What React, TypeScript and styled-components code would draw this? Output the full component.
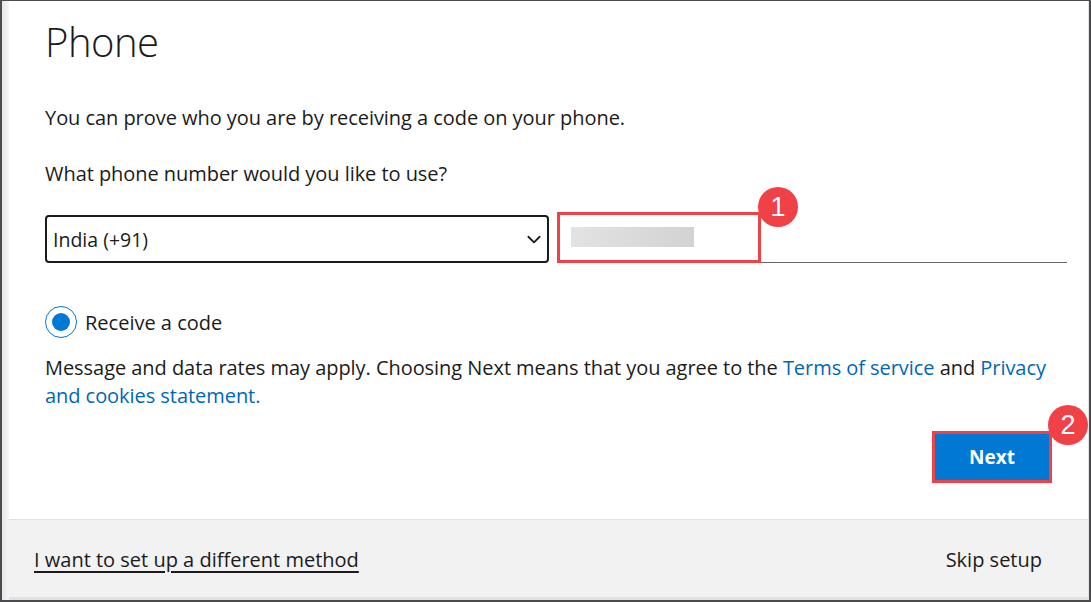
import React from "react";
import styled, { createGlobalStyle } from "styled-components";

const Global = createGlobalStyle`
  html, body { margin: 0; padding: 0; background: #ffffff; }
  * { box-sizing: border-box; }
  body { font-family: "Open Sans", "Noto Sans", sans-serif; }
`;

const Frame = styled.div`
  width: 1091px;
  height: 602px;
  border: 2px solid #4b4a4c;
  border-top-width: 1px;
  display: flex;
  background: #ffffff;
  overflow: hidden;
`;

const EdgeShade = styled.div`
  width: 7px;
  flex: none;
  background: linear-gradient(to right, #e6e6e6, #f4f4f4);
`;

const Card = styled.div`
  flex: 1;
  display: flex;
  flex-direction: column;
  border-right: 1px solid #e4e4e4;
  border-bottom: 3px solid #e2e2e2;
`;

const Body = styled.div`
  flex: 1;
  padding: 14px 20px 0 36px;
  display: flex;
  flex-direction: column;
`;

const Title = styled.h1`
  margin: 0;
  font-family: "Open Sans", sans-serif;
  font-weight: 300;
  font-size: 40px;
  line-height: 54px;
  color: #1b1b1b;
  letter-spacing: -0.5px;
`;

const Para = styled.p<{ $top: number }>`
  margin: ${(p) => p.$top}px 0 0 0;
  font-family: "Open Sans", sans-serif;
  font-size: 20px;
  line-height: 28px;
  color: #1b1b1b;
  letter-spacing: -0.05px;
`;

const PhoneRow = styled.div`
  margin-top: 27px;
  display: flex;
  align-items: flex-end;
  gap: 8px;
  width: 1022px;
`;

const SelectBox = styled.div`
  width: 504px;
  height: 48px;
  border: 2px solid #1b1b1b;
  border-radius: 4px;
  display: flex;
  align-items: center;
  justify-content: space-between;
  padding: 0 4px 0 6px;
  font-family: "Open Sans", sans-serif;
  font-size: 19.5px;
  color: #1b1b1b;
`;

const InputWrap = styled.div`
  position: relative;
  flex: 1;
  height: 48px;
  border-bottom: 1px solid #666666;
  display: flex;
  align-items: center;
  padding-left: 14px;
`;

const Blurred = styled.div`
  width: 123px;
  height: 20px;
  margin-top: -4px;
  background: linear-gradient(100deg, #e3e3e3 0%, #d9d9d9 60%, #d2d2d2 100%);
  filter: blur(0.6px);
`;

const Highlight = styled.div<{ $w: number; $h: number; $l: number; $t: number }>`
  position: absolute;
  left: ${(p) => p.$l}px;
  top: ${(p) => p.$t}px;
  width: ${(p) => p.$w}px;
  height: ${(p) => p.$h}px;
  border: 3px solid #ef4146;
  pointer-events: none;
`;

const Badge = styled.div<{ $l: number; $t: number }>`
  position: absolute;
  left: ${(p) => p.$l}px;
  top: ${(p) => p.$t}px;
  width: 40px;
  height: 40px;
  border-radius: 50%;
  background: #ef4146;
  color: #ffffff;
  font-family: "Liberation Sans", Arial, sans-serif;
  font-size: 27px;
  font-weight: 400;
  display: flex;
  align-items: center;
  justify-content: center;
  line-height: 1;
`;

const RadioRow = styled.label`
  margin-top: 43px;
  display: flex;
  align-items: center;
  gap: 8px;
  font-family: "Open Sans", sans-serif;
  font-size: 20px;
  color: #1b1b1b;
`;

const RadioOuter = styled.span`
  width: 32px;
  height: 32px;
  border-radius: 50%;
  border: 1.5px solid #0078d4;
  display: flex;
  align-items: center;
  justify-content: center;
`;

const RadioDot = styled.span`
  width: 18px;
  height: 18px;
  border-radius: 50%;
  background: #0078d4;
`;

const Link = styled.a`
  color: #0067b8;
  text-decoration: none;
`;

const ButtonRow = styled.div`
  margin-top: 21px;
  display: flex;
  justify-content: flex-end;
  padding-right: 16px;
`;

const ButtonWrap = styled.div`
  position: relative;
`;

const NextButton = styled.button`
  width: 120px;
  height: 52px;
  background: #0078d4;
  border: 3px solid #ef4146;
  color: #ffffff;
  font-family: "Open Sans", sans-serif;
  font-weight: 700;
  font-size: 19px;
  cursor: pointer;
`;

const Footer = styled.div`
  height: 78px;
  background: #f2f2f2;
  border-top: 1px solid #e3e3e3;
  display: flex;
  align-items: center;
  justify-content: space-between;
  padding: 2px 46px 0 25px;
  font-family: "Open Sans", sans-serif;
  font-size: 20px;
  color: #1b1b1b;
`;

const FooterLink = styled.a`
  color: #1b1b1b;
  text-decoration: underline;
  text-underline-offset: 4px;
  text-decoration-thickness: 2px;
`;

const Skip = styled.span`
  color: #1b1b1b;
`;

const Chevron = () => (
  <svg width="18" height="18" viewBox="0 0 16 16" fill="none">
    <path d="M3 6l5 5 5-5" stroke="#1b1b1b" strokeWidth="1.6" strokeLinecap="round" strokeLinejoin="round" />
  </svg>
);

export default function App() {
  return (
    <>
      <Global />
      <Frame>
        <EdgeShade />
        <Card>
          <Body>
            <Title>Phone</Title>
            <Para $top={35}>You can prove who you are by receiving a code on your phone.</Para>
            <Para $top={28}>What phone number would you like to use?</Para>
            <PhoneRow>
              <SelectBox>
                <span>India (+91)</span>
                <Chevron />
              </SelectBox>
              <InputWrap>
                <Blurred />
                <Highlight $l={0} $t={-3} $w={204} $h={51} />
                <Badge $l={201} $t={-28}>1</Badge>
              </InputWrap>
            </PhoneRow>
            <RadioRow>
              <RadioOuter>
                <RadioDot />
              </RadioOuter>
              Receive a code
            </RadioRow>
            <Para $top={16}>
              Message and data rates may apply. Choosing Next means that you agree to the{" "}
              <Link>Terms of service</Link> and <Link>Privacy and cookies statement.</Link>
            </Para>
            <ButtonRow>
              <ButtonWrap>
                <NextButton>Next</NextButton>
                <Badge $l={116} $t={-26}>2</Badge>
              </ButtonWrap>
            </ButtonRow>
          </Body>
          <Footer>
            <FooterLink>I want to set up a different method</FooterLink>
            <Skip>Skip setup</Skip>
          </Footer>
        </Card>
      </Frame>
    </>
  );
}
